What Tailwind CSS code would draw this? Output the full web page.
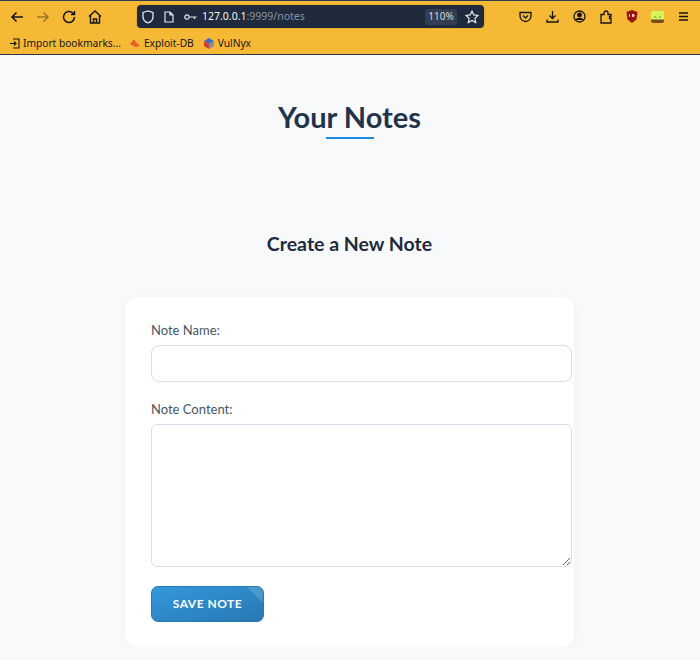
<!DOCTYPE html>
<html lang="en">
<head>
    <meta charset="UTF-8">
    <title>Your Notes</title>
    <script src="https://cdn.jsdelivr.net/npm/@tailwindcss/browser@4"></script>
</head>
<body class="bg-[#f7f9fb] font-['Lato',sans-serif] overflow-hidden">
    <!-- Browser chrome -->
    <header class="h-[55px] bg-[#f6b935] border-t border-b border-t-[#2b3a55] border-b-[#2f3a4a] text-[#15141a] font-['Noto_Sans',sans-serif]">
        <div class="h-[31px] flex items-center">
            <div class="w-[137px] flex items-center text-[#15141a]">
                <svg class="ml-[10px] w-[14px] h-[14px]" viewBox="0 0 14 14" fill="none" stroke="currentColor" stroke-width="1.5"><path d="M13 7H2M6.500 2.500 2 7l4.500 4.500"/></svg>
                <svg class="ml-[12px] w-[14px] h-[14px] opacity-40" viewBox="0 0 14 14" fill="none" stroke="currentColor" stroke-width="1.5"><path d="M1 7h11M7.500 2.500 12 7l-4.500 4.500"/></svg>
                <svg class="ml-[12px] w-[14px] h-[14px]" viewBox="0 0 14 14" fill="none" stroke="currentColor" stroke-width="1.5"><path d="M12.500 7a5.500 5.500 0 1 1-1.700-4L12.500 4.500M12.500 1v3.500H9"/></svg>
                <svg class="ml-[12px] w-[14px] h-[14px]" viewBox="0 0 14 14" fill="none" stroke="currentColor" stroke-width="1.400"><path d="M1 6.500 7 1l6 5.500M2.500 5.500V13h9V5.500M5.500 13V9h3v4"/></svg>
            </div>
            <div class="w-[347px] h-[23px] bg-[#1f2a3c] rounded-[4px] flex items-center text-white ring-1 ring-[#e8ad2e]">
                <svg class="ml-[5px] w-[12px] h-[14px]" viewBox="0 0 12 14" fill="none" stroke="#e5e7eb" stroke-width="1.300"><path d="M6 1 1 2.500V7c0 3 2.500 5 5 6 2.500-1 5-3 5-6V2.500z"/></svg>
                <svg class="ml-[10px] w-[10px] h-[12px]" viewBox="0 0 10 12" fill="none" stroke="#e5e7eb" stroke-width="1.200"><path d="M1 1h5l3 3v7H1zM6 1v3h3"/></svg>
                <svg class="ml-[10px] w-[13px] h-[8px]" viewBox="0 0 13 8" fill="none" stroke="#e5e7eb" stroke-width="1.200"><circle cx="3" cy="4" r="2.200"/><path d="M5.500 4H12.500M10.500 4v2"/></svg>
                <span class="ml-[5px] text-[10.500px] text-[#f3f4f6]">127.0.0.1<span class="text-[#8a93a3]">:9999/notes</span></span>
                <span class="ml-auto w-[32px] h-[16px] bg-[#333e50] rounded-[3px] flex items-center justify-center text-[10px] text-[#d5d8de]">110%</span>
                <svg class="ml-[8px] mr-[5px] w-[14px] h-[14px]" viewBox="0 0 14 14" fill="none" stroke="#e5e7eb" stroke-width="1.200"><path d="m7 1 1.800 3.900 4.200.5-3.100 2.900.8 4.200L7 10.400 3.300 12.500l.8-4.200L1 5.400l4.200-.5z"/></svg>
            </div>
            <div class="flex-1 flex items-center">
                <svg class="ml-[35px] w-[13px] h-[12px]" viewBox="0 0 13 12" fill="none" stroke="currentColor" stroke-width="1.300"><path d="M1 1.500h11V5a5.500 5.500 0 0 1-11 0zM4 4.500 6.500 7 9 4.500"/></svg>
                <svg class="ml-[14px] w-[13px] h-[13px]" viewBox="0 0 13 13" fill="none" stroke="currentColor" stroke-width="1.300"><path d="M6.500 1v7.500M3.500 5.500l3 3 3-3M1 9.500V12h11V9.500"/></svg>
                <svg class="ml-[14px] w-[13px] h-[13px]" viewBox="0 0 13 13" fill="none" stroke="currentColor" stroke-width="1.300"><circle cx="6.500" cy="6.500" r="5.500"/><circle cx="6.500" cy="5" r="1.800" fill="currentColor"/><path d="M3 10c1-2 6-2 7 0" fill="currentColor"/></svg>
                <svg class="ml-[14px] w-[13px] h-[14px]" viewBox="0 0 13 14" fill="none" stroke="currentColor" stroke-width="1.300"><path d="M1 4.500h3V3a2 2 0 0 1 4 0v1.500h3v2H9.500v2H11V13H1z"/></svg>
                <svg class="ml-[13px] w-[12px] h-[13px]" viewBox="0 0 12 13"><path d="M6 0 11.500 2 10.500 9.500 6 13 1.500 9.500.5 2z" fill="#9c1111"/><path d="M3 4h1v3h2V4h1.500c1.500 0 1.500 3 0 3H3z" fill="#f0d0c0"/></svg>
                <svg class="ml-[13px] w-[13px] h-[12px]" viewBox="0 0 13 12"><rect width="13" height="12" rx="2" fill="#d4f55e"/><path d="M0 8.500h13V10a2 2 0 0 1-2 2H2a2 2 0 0 1-2-2z" fill="#7a4a1c"/><path d="M3 5.500 5.500 6.500M8 6.500 10 5.500" stroke="#5f9e2f" stroke-width="1"/></svg>
                <svg class="ml-[14px] w-[11px] h-[9px]" viewBox="0 0 11 9" stroke="currentColor" stroke-width="1.300"><path d="M1 1h9M1 4.500h9M1 8h9"/></svg>
            </div>
        </div>
        <div class="h-[22px] flex items-center text-[10.200px] leading-none">
            <svg class="ml-[9px] w-[11px] h-[11px]" viewBox="0 0 11 11" fill="none" stroke="currentColor" stroke-width="1.100"><path d="M4 1h6v9H4M1 5.500h6M5 3.500l2 2-2 2"/></svg>
            <span class="ml-[3px]">Import bookmarks...</span>
            <svg class="ml-[9px] w-[10px] h-[10px]" viewBox="0 0 10 10"><path d="M0 6 4 1l2 3 4 4-4 1-3-1z" fill="#e8602a"/></svg>
            <span class="ml-[4px]">Exploit-DB</span>
            <svg class="ml-[10px] w-[10px] h-[11px]" viewBox="0 0 10 11"><path d="M5 0 10 3 5 6 0 3z" fill="#3b6fc4"/><path d="M0 3 5 6v5L0 8z" fill="#d13b3b"/><path d="M10 3 5 6v5l5-3z" fill="#8a8f98"/></svg>
            <span class="ml-[4px]">VulNyx</span>
        </div>
    </header>

    <main class="flex flex-col items-center pr-[1px]">
        <h1 class="mt-[43px] text-[29px] leading-[38px] font-bold text-[#22344a]">Your Notes</h1>
        <div class="mt-[1px] w-[48px] h-[2px] bg-[#1a8ae5]"></div>
        <h2 class="mt-[91px] text-[19.500px] leading-[28px] font-bold text-[#1f2a3c]">Create a New Note</h2>

        <form class="mt-[39px] w-[449px] h-[350px] bg-white rounded-[12px] shadow-[0_2px_8px_rgba(30,50,90,0.04)] px-[26px] pt-[23px]">
            <label class="block text-[13px] leading-[20px] text-[#475569]">Note Name:</label>
            <input type="text" class="block mt-[5px] w-[421px] h-[37px] bg-white border border-[#d5deeb] rounded-[8px]">
            <label class="block mt-[17px] text-[13px] leading-[20px] text-[#475569]">Note Content:</label>
            <textarea class="block mt-[5px] w-[421px] h-[143px] bg-white border border-[#d5deeb] rounded-[6px]"></textarea>
            <button type="button" class="relative block mt-[19px] w-[113px] h-[36px] rounded-[7px] border border-[#2a78b0] bg-gradient-to-br from-[#3498db] to-[#2878b2] text-white text-[12px] font-bold tracking-[0.5px] overflow-hidden">
                SAVE NOTE
                <span class="absolute top-0 right-0 w-[16px] h-[16px] bg-white/15 [clip-path:polygon(0_0,100%_0,100%_100%)]"></span>
            </button>
        </form>
    </main>
</body>
</html>
